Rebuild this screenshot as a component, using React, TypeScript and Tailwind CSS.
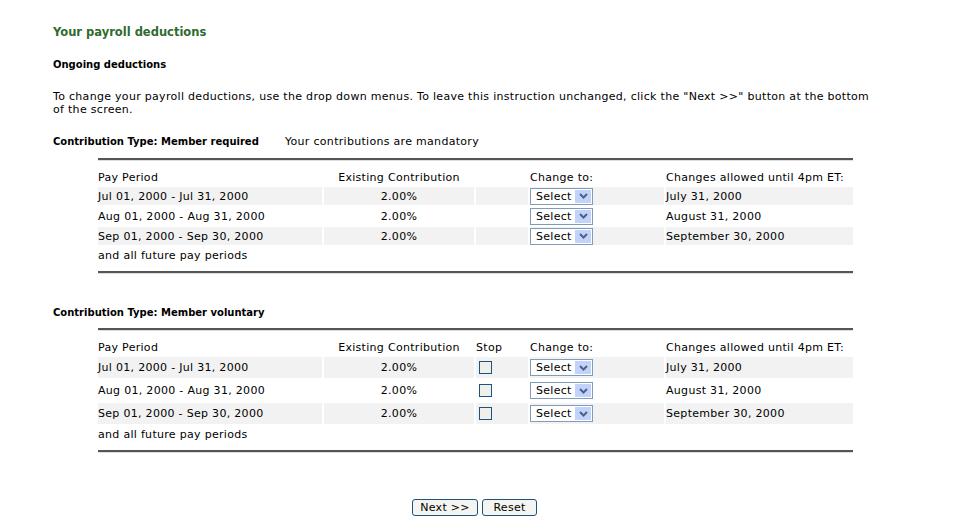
const rows = [
  ["Jul 01, 2000 - Jul 31, 2000", "July 31, 2000"],
  ["Aug 01, 2000 - Aug 31, 2000", "August 31, 2000"],
  ["Sep 01, 2000 - Sep 30, 2000", "September 30, 2000"],
];

function Sel() {
  return (
    <div className="inline-flex items-center h-[17px] w-[63px] border border-[#7f9db9] bg-white pl-[5px] pr-[1px] justify-between">
      <span>Select</span>
      <span className="w-[16px] h-[13px] bg-[#c1d3fb] flex items-center justify-center">
        <svg width="9" height="6" viewBox="0 0 9 6"><path d="M1 1l3.5 3.5L8 1" stroke="#4d6185" strokeWidth="2" fill="none" /></svg>
      </span>
    </div>
  );
}

function Box() {
  return <div className="w-[13px] h-[13px] border border-[#1c5180] bg-[#f0f0ea] ml-[3px]" />;
}

function Table({ stop }: { stop: boolean }) {
  const h = stop ? "h-[21px]" : "h-[18px]";
  return (
    <div className="ml-[45px] w-[755px]">
      <div className="border-t-2 border-[#555] border-b border-b-[#ddd] h-0" />
      <table className="border-separate border-spacing-[2px] w-[759px] -ml-[2px] mt-[6px]">
        <colgroup>
          <col className="w-[224px]" /><col className="w-[150px]" /><col className="w-[52px]" /><col className="w-[134px]" /><col />
        </colgroup>
        <tbody>
          <tr className="h-[16px]">
            <td>Pay Period</td><td className="text-center">Existing Contribution</td>
            <td>{stop ? "Stop" : ""}</td><td>Change to:</td><td>Changes allowed until 4pm ET:</td>
          </tr>
          {rows.map((r, i) => (
            <tr key={i} className={h}>
              <td className={i % 2 === 0 ? "bg-[#f2f2f2]" : ""}>{r[0]}</td>
              <td className={"text-center " + (i % 2 === 0 ? "bg-[#f2f2f2]" : "")}>2.00%</td>
              <td className={i % 2 === 0 ? "bg-[#f2f2f2]" : ""}>{stop && <Box />}</td>
              <td className={i % 2 === 0 ? "bg-[#f2f2f2]" : ""}><Sel /></td>
              <td className={i % 2 === 0 ? "bg-[#f2f2f2]" : ""}>{r[1]}</td>
            </tr>
          ))}
          <tr className="h-[16px]"><td colSpan={5}>and all future pay periods</td></tr>
        </tbody>
      </table>
      <div className="mt-[6px] border-t-2 border-[#555] border-b border-b-[#ddd] h-0" />
    </div>
  );
}

export default function App() {
  return (
    <div className="w-[956px] h-[532px] bg-white text-black text-[11px] tracking-[0.3px] leading-[13px] pl-[53px] pt-[26px]" style={{ fontFamily: "'DejaVu Sans', Verdana, sans-serif" }}>
      <div className="text-[#2f6b2f] font-bold text-[11.5px] tracking-normal">Your payroll deductions</div>
      <div className="font-bold text-[10px] tracking-normal mt-[19px]">Ongoing deductions</div>
      <div className="mt-[19px] w-[830px]">To change your payroll deductions, use the drop down menus. To leave this instruction unchanged, click the "Next &gt;&gt;" button at the bottom of the screen.</div>
      <div className="mt-[19px] flex"><span className="font-bold text-[10px] tracking-normal w-[232px]">Contribution Type: Member required</span><span>Your contributions are mandatory</span></div>
      <div className="mt-[10px]"><Table stop={false} /></div>
      <div className="font-bold text-[10px] tracking-normal mt-[32px]">Contribution Type: Member voluntary</div>
      <div className="mt-[9px]"><Table stop={true} /></div>
      <div className="flex justify-center gap-[4px] mt-[46px] pr-[60px]">
        <button className="h-[17px] w-[66px] border border-[#1c5180] rounded-[3px] bg-[#f4f4f0]">Next &gt;&gt;</button>
        <button className="h-[17px] w-[55px] border border-[#1c5180] rounded-[3px] bg-[#f4f4f0]">Reset</button>
      </div>
    </div>
  );
}
